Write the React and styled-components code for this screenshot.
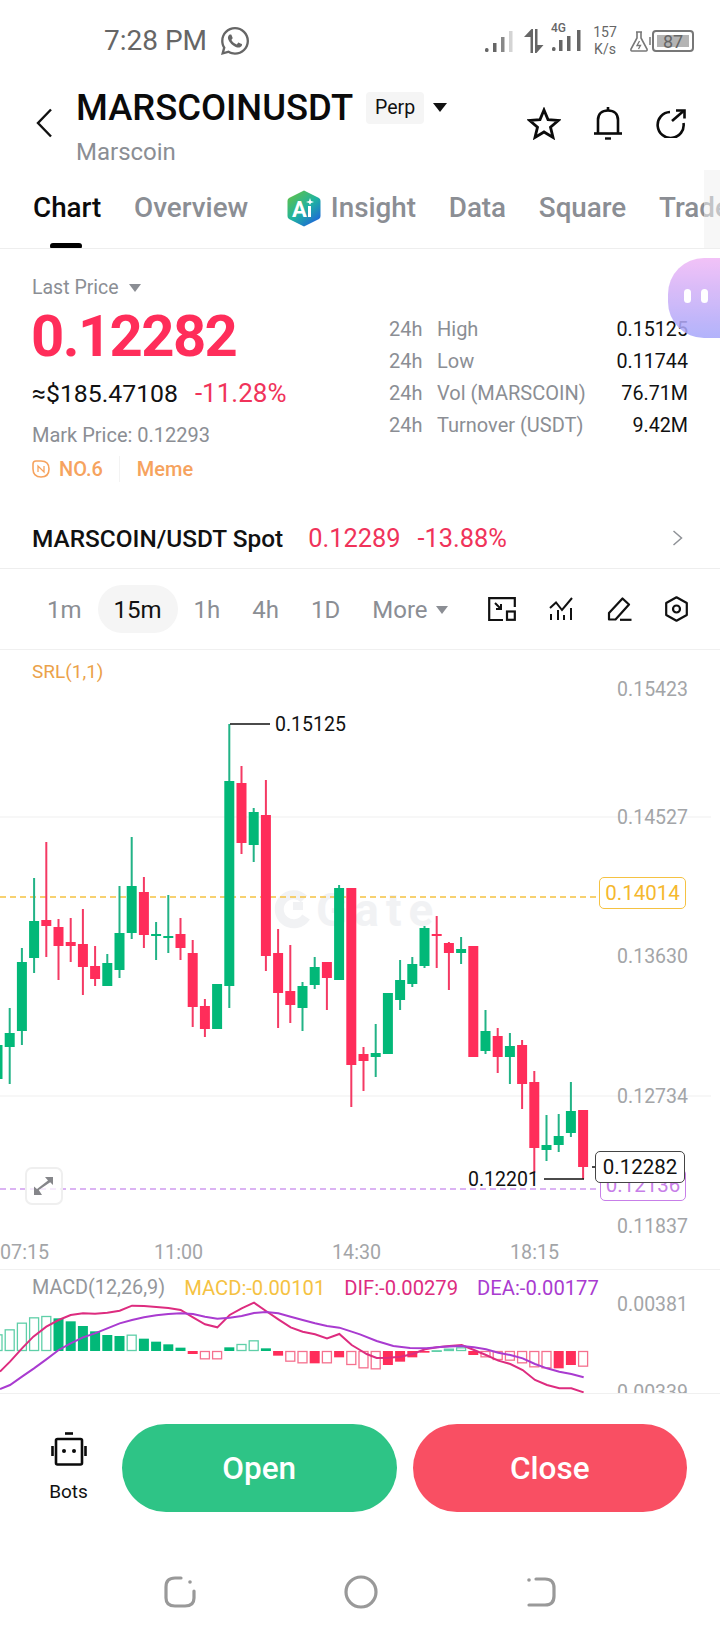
import React from 'react'
import styled, { createGlobalStyle } from 'styled-components'
import { FaWhatsapp } from 'react-icons/fa'

const GlobalStyle = createGlobalStyle`
  html, body {
    margin: 0;
    padding: 0;
    background: #fff;
  }
  * {
    box-sizing: border-box;
  }
`

const GREEN = '#02b878'
const RED = '#ff2d5a'
const GREY = '#8b8e94'
const AXIS = '#a3a5a8'

const Page = styled.div`
  position: relative;
  width: 720px;
  height: 1640px;
  overflow: hidden;
  background: #fff;
  font-family: Roboto, 'Liberation Sans', sans-serif;
  color: #111;
`

const StatusBar = styled.div`
  display: flex;
  align-items: center;
  justify-content: space-between;
  height: 82px;
  padding: 0 26px 0 104px;
  color: #666;
`

const StatusLeft = styled.div`
  display: flex;
  align-items: center;
  gap: 12px;
  font-size: 28px;
  line-height: 34px;
`

const StatusRight = styled.div`
  display: flex;
  align-items: center;
`

const NetworkCell = styled.div`
  position: relative;
  margin-left: ${p => p.$gap}px;
  line-height: 0;
`

const NetworkLabel = styled.span`
  position: absolute;
  left: 0;
  top: -7px;
  font-size: 12px;
  line-height: 12px;
  font-weight: 500;
  color: #666;
`

const NetSpeed = styled.div`
  width: 24px;
  margin: 0 12px 0 11px;
  font-size: 14px;
  line-height: 17px;
  text-align: center;
`

const Battery = styled.div`
  position: relative;
  width: 42px;
  height: 22px;
  margin-left: 3px;
  padding: 3px;
  border: 2px solid #777;
  border-radius: 4px;
  &::before {
    content: '';
    position: absolute;
    left: -5px;
    top: 5px;
    width: 2px;
    height: 8px;
    background: #999;
  }
`

const BatteryFill = styled.div`
  display: flex;
  align-items: center;
  justify-content: center;
  height: 100%;
  background: #b4b4b4;
  font-size: 18px;
  color: #666;
`

const Header = styled.div`
  display: flex;
  align-items: flex-start;
  height: 88px;
  padding: 8px 33px 0 36px;
`

const BackButton = styled.div`
  width: 40px;
  padding-top: 18px;
  line-height: 0;
`

const TitleBlock = styled.div`
  flex: 1;
`

const TitleRow = styled.div`
  display: flex;
  align-items: center;
  height: 34px;
`

const Symbol = styled.div`
  font-size: 36.4px;
  font-weight: 500;
  color: #0b0b0b;
`

const PerpPill = styled.div`
  margin: 2px 0 0 13px;
  padding: 0 9px;
  height: 32px;
  line-height: 31px;
  border-radius: 4px;
  background: #f5f5f5;
  font-size: 19.5px;
`

const Caret = styled.span`
  display: inline-block;
  width: 0;
  height: 0;
  margin-left: ${p => p.$gap || 8}px;
  border-left: ${p => p.$size}px solid transparent;
  border-right: ${p => p.$size}px solid transparent;
  border-top: ${p => p.$size * 1.35}px solid ${p => p.$color};
`

const CoinName = styled.div`
  margin-top: 15px;
  font-size: 24px;
  line-height: 26px;
  color: ${GREY};
`

const HeaderIcons = styled.div`
  display: flex;
  align-items: center;
  gap: 32px;
  padding-top: 16px;
`

const Tabs = styled.div`
  position: relative;
  display: flex;
  align-items: center;
  gap: 32.7px;
  height: 79px;
  padding: 0 0 2px 33px;
  border-bottom: 1px solid #eeeeee;
  white-space: nowrap;
  overflow: hidden;
  &::after {
    content: '';
    position: absolute;
    top: 0;
    right: 0;
    width: 16px;
    height: 100%;
    background: rgba(240, 240, 240, 0.55);
  }
`

const Tab = styled.div`
  position: relative;
  flex: none;
  font-size: 27.8px;
  line-height: 34px;
  font-weight: 500;
  color: ${p => (p.$active ? '#0b0b0b' : GREY)};
`

const TabMark = styled.div`
  position: absolute;
  left: 17px;
  bottom: -24px;
  width: 32px;
  height: 6px;
  border-radius: 3px;
  background: #000;
`

const InsightTab = styled.div`
  display: flex;
  align-items: center;
  gap: 10px;
  margin-left: 6px;
`

const Summary = styled.div`
  display: flex;
  justify-content: space-between;
  height: 257px;
  padding: 26px 32px 0 32px;
`

const SummaryLeft = styled.div`
  display: flex;
  flex-direction: column;
`

const LastPrice = styled.div`
  display: flex;
  align-items: center;
  font-size: 19.5px;
  line-height: 26px;
  color: ${GREY};
`

const BigPrice = styled.div`
  margin: 5px 0 0 -1px;
  font-size: 58px;
  line-height: 60px;
  font-weight: 700;
  letter-spacing: -1.6px;
  color: ${RED};
`

const SubPrice = styled.div`
  display: flex;
  align-items: baseline;
  gap: 17px;
  margin-top: 12px;
  font-size: 24.8px;
  line-height: 30px;
`

const RedText = styled.span`
  font-size: 26px;
  color: #f0335a;
`

const MarkPrice = styled.div`
  margin-top: 13px;
  font-size: 20px;
  line-height: 26px;
  color: ${GREY};
`

const TagRow = styled.div`
  display: flex;
  align-items: center;
  margin-top: 8px;
  font-size: 20px;
  line-height: 26px;
  font-weight: 500;
  color: #f6a35e;
`

const TagRank = styled.div`
  display: flex;
  align-items: center;
  gap: 9px;
  padding-right: 16px;
  margin-right: 17px;
  border-right: 1px solid #f3f3f3;
`

const StatsTable = styled.div`
  width: 299px;
  margin-top: 38px;
`

const StatRow = styled.div`
  display: flex;
  align-items: center;
  height: 32px;
  font-size: 20px;
  color: ${GREY};
`

const StatPeriod = styled.span`
  width: 48px;
`

const StatValue = styled.span`
  margin-left: auto;
  font-size: 19.7px;
  color: #111;
`

const Bubble = styled.div`
  position: absolute;
  top: 258px;
  right: 0;
  display: flex;
  align-items: center;
  justify-content: flex-end;
  gap: 10px;
  width: 52px;
  height: 80px;
  padding: 0 12px 4px 0;
  border-radius: 36px 0 0 36px;
  background: linear-gradient(180deg, #f0b8f6, #a6a7fb);
  opacity: 0.86;
`

const BubbleEye = styled.span`
  width: 7px;
  height: 14px;
  border-radius: 4px;
  background: #fff;
`

const SpotRow = styled.div`
  display: flex;
  align-items: center;
  height: 63px;
  padding: 2px 37px 0 32px;
  border-bottom: 1px solid #eeeeee;
  font-size: 25.4px;
`

const SpotName = styled.span`
  font-size: 24.4px;
  font-weight: 500;
  margin-right: 25px;
`

const SpotChange = styled.span`
  margin-left: 17px;
  color: #f0335a;
`

const SpotPrice = styled.span`
  color: #f0335a;
`

const SpotChevron = styled.div`
  margin-left: auto;
  line-height: 0;
`

const IntervalBar = styled.div`
  display: flex;
  align-items: center;
  height: 81px;
  padding: 0 32px 0 31px;
  border-bottom: 1px solid #f0f0f0;
`

const Interval = styled.div`
  display: flex;
  align-items: center;
  height: 48px;
  padding: 2px 16px 0;
  border-radius: 24px;
  font-size: 24px;
  background: ${p => (p.$active ? '#f5f5f5' : 'transparent')};
  color: ${p => (p.$active ? '#111' : GREY)};
`

const ToolIcons = styled.div`
  display: flex;
  align-items: center;
  margin-left: auto;
  gap: 33.5px;
`

const ChartPanel = styled.div`
  position: relative;
  height: 620px;
  border-bottom: 1px solid #f0f0f0;
  overflow: hidden;
`

const ChartSvg = styled.svg`
  position: absolute;
  left: 0;
  top: 0;
  display: block;
`

const Indicator = styled.div`
  position: absolute;
  left: 32px;
  top: 10px;
  font-size: 19px;
  line-height: 24px;
  color: #eba24a;
`

const Watermark = styled.div`
  position: absolute;
  left: 316px;
  top: 232px;
  font-size: 46px;
  line-height: 56px;
  font-weight: 700;
  letter-spacing: 7px;
  color: #f1f2f4;
`

const AxisLabel = styled.div`
  position: absolute;
  right: 32px;
  top: ${p => p.$y}px;
  transform: translateY(-50%);
  font-size: 19.5px;
  line-height: 24px;
  color: ${AXIS};
`

const PriceTag = styled.div`
  position: absolute;
  left: ${p => p.$left}px;
  top: ${p => p.$top}px;
  width: ${p => p.$width}px;
  height: 32px;
  border: 1px solid ${p => p.$color};
  border-radius: 5px;
  background: #fff;
  font-size: 20.5px;
  line-height: 30px;
  text-align: center;
  color: ${p => p.$text};
`

const PeakLabel = styled.div`
  position: absolute;
  left: ${p => p.$x}px;
  top: ${p => p.$y}px;
  transform: translateY(-50%);
  font-size: 19.5px;
  line-height: 24px;
  color: #111;
`

const ExpandButton = styled.div`
  position: absolute;
  left: 25px;
  top: 517px;
  display: flex;
  align-items: center;
  justify-content: center;
  width: 38px;
  height: 38px;
  border: 2px solid #efefef;
  border-radius: 7px;
  background: rgba(255, 255, 255, 0.75);
`

const TimeLabel = styled.div`
  position: absolute;
  left: ${p => p.$x}px;
  top: 591px;
  font-size: 19.7px;
  line-height: 24px;
  color: ${AXIS};
`

const MacdPanel = styled.div`
  position: relative;
  height: 124px;
  border-bottom: 1px solid #f0f0f0;
  overflow: hidden;
`

const MacdLegend = styled.div`
  position: relative;
  display: flex;
  gap: 19px;
  padding: 6px 0 0 32px;
  line-height: 24px;
`

const LegendItem = styled.span`
  font-size: ${p => p.$size || 20.2}px;
  color: ${p => p.$color};
`

const ActionBar = styled.div`
  display: flex;
  align-items: center;
  gap: 16px;
  height: 148px;
  padding: 0 33px 0 0;
`

const BotsButton = styled.div`
  display: flex;
  flex: none;
  flex-direction: column;
  align-items: center;
  gap: 14px;
  width: 106px;
  padding: 0 0 0 31px;
  font-size: 19px;
  line-height: 24px;
`

const TradeButton = styled.div`
  display: flex;
  flex: 1;
  align-items: center;
  justify-content: center;
  height: 88px;
  border-radius: 44px;
  background: ${p => p.$color};
  color: #fff;
  font-size: 31.5px;
  font-weight: 500;
`

const NavBar = styled.div`
  display: flex;
  align-items: center;
  justify-content: center;
  gap: 148px;
  height: 60px;
  margin-top: 20px;
`

// [color, high, bodyTop, bodyBottom, low]
const candles = [
  ['g', 1045, 1045, 1079, 1079], ['g', 1008, 1033, 1047, 1084], ['g', 948, 962, 1031, 1045],
  ['g', 878, 921, 958, 973], ['r', 842, 920, 926, 957], ['r', 919, 927, 946, 980],
  ['r', 918, 942, 946, 962], ['r', 909, 944, 967, 995], ['r', 946, 966, 979, 986],
  ['g', 954, 963, 986, 986], ['g', 886, 933, 970, 978], ['g', 837, 886, 933, 939],
  ['r', 877, 892, 935, 948], ['g', 922, 934, 936, 960], ['g', 895, 936, 938, 953],
  ['r', 918, 934, 948, 960], ['r', 940, 953, 1007, 1027], ['r', 999, 1006, 1029, 1037],
  ['g', 984, 984, 1029, 1029], ['g', 724, 781, 986, 1008], ['r', 766, 783, 843, 854],
  ['g', 808, 812, 845, 862], ['r', 780, 815, 956, 971], ['r', 929, 953, 993, 1028],
  ['r', 945, 991, 1005, 1023], ['g', 982, 986, 1008, 1031], ['g', 957, 967, 985, 989],
  ['r', 962, 962, 978, 1010], ['g', 885, 888, 980, 980], ['r', 888, 888, 1065, 1107],
  ['r', 1047, 1054, 1061, 1091], ['g', 1024, 1053, 1057, 1077], ['g', 993, 993, 1054, 1054],
  ['g', 960, 980, 1000, 1010], ['g', 957, 964, 984, 987], ['g', 926, 928, 966, 968],
  ['r', 916, 934, 936, 968], ['r', 942, 943, 953, 990], ['g', 937, 949, 953, 964],
  ['r', 946, 946, 1057, 1057], ['g', 1010, 1031, 1051, 1054], ['r', 1028, 1036, 1057, 1073],
  ['g', 1033, 1046, 1057, 1084], ['r', 1040, 1045, 1084, 1109], ['r', 1071, 1082, 1148, 1173],
  ['g', 1115, 1145, 1150, 1161], ['g', 1114, 1136, 1145, 1152], ['g', 1082, 1111, 1133, 1137],
  ['r', 1110, 1110, 1167, 1179],
]

const candleX = i => -2.5 + 12.2 * i

// [color, filled, top, bottom], in units of the 3x crop, baseline 333
const histogram = [
  ['g', 0, 283, 333], ['g', 0, 268, 333], ['g', 0, 248, 333], ['g', 0, 232, 333], ['g', 0, 228, 333],
  ['g', 1, 235, 333], ['g', 1, 244, 333], ['g', 1, 258, 333], ['g', 1, 274, 333], ['g', 1, 285, 333],
  ['g', 1, 288, 333], ['g', 0, 284, 333], ['g', 1, 296, 333], ['g', 1, 305, 333], ['g', 1, 313, 333],
  ['g', 1, 323, 333], ['r', 1, 333, 342], ['r', 0, 333, 358], ['r', 0, 333, 358], ['g', 1, 322, 333],
  ['g', 0, 312, 333], ['g', 0, 301, 333], ['g', 1, 325, 333], ['r', 1, 333, 347], ['r', 0, 333, 365],
  ['r', 0, 333, 370], ['r', 1, 333, 370], ['r', 0, 333, 370], ['r', 1, 333, 352], ['r', 0, 333, 375],
  ['r', 0, 333, 385], ['r', 0, 333, 388], ['r', 1, 333, 375], ['r', 1, 333, 365], ['r', 1, 333, 352],
  ['r', 1, 333, 338], ['g', 0, 331, 333], ['g', 0, 326, 333], ['g', 0, 322, 333], ['r', 1, 333, 345],
  ['r', 0, 333, 352], ['r', 0, 333, 360], ['r', 0, 333, 362], ['r', 0, 333, 370], ['r', 0, 333, 382],
  ['r', 0, 333, 385], ['r', 1, 333, 385], ['r', 1, 333, 375], ['r', 0, 333, 380],
]

const difLine = [
  [0, 395], [30, 365], [66, 325], [100, 290], [139, 260], [176, 240], [212, 225], [249, 220], [285, 221],
  [322, 218], [359, 212], [396, 197], [432, 198], [469, 201], [505, 204], [542, 210], [579, 232], [615, 253],
  [652, 262], [689, 225], [725, 205], [762, 188], [798, 213], [835, 238], [872, 262], [908, 275], [945, 283],
  [981, 295], [1018, 282], [1055, 315], [1080, 330], [1100, 342], [1130, 354], [1165, 353], [1202, 350],
  [1238, 342], [1275, 328], [1311, 322], [1348, 318], [1385, 315], [1422, 330], [1458, 345], [1495, 362],
  [1531, 372], [1568, 390], [1605, 420], [1641, 435], [1678, 445], [1714, 445], [1751, 457],
]

const deaLine = [
  [0, 447], [30, 435], [66, 410], [102, 385], [139, 358], [176, 330], [212, 310], [249, 292], [285, 280],
  [322, 265], [359, 250], [396, 240], [432, 232], [469, 226], [505, 222], [542, 220], [579, 222], [615, 230],
  [652, 236], [689, 233], [725, 228], [762, 219], [798, 216], [835, 220], [872, 230], [908, 240], [945, 250],
  [981, 258], [1018, 263], [1055, 275], [1080, 283], [1130, 303], [1180, 318], [1230, 324], [1280, 325],
  [1330, 320], [1385, 318], [1422, 322], [1458, 328], [1495, 338], [1531, 345], [1568, 355], [1605, 372],
  [1641, 385], [1678, 395], [1714, 402], [1751, 412],
]

const toPoints = line => line.map(([x, y]) => `${x / 3},${y / 3 + 1240}`).join(' ')

const SignalIcon = () => (
  <svg width="31" height="24" viewBox="0 0 31 24">
    <rect x="1" y="19" width="3.5" height="4" rx="1.5" fill="#666" />
    <rect x="9" y="14" width="3.5" height="9" fill="#666" />
    <rect x="17" y="8" width="3.5" height="15" fill="#888" />
    <rect x="25" y="2" width="3.5" height="21" fill="#d4d4d4" />
  </svg>
)

const SignalDataIcon = () => (
  <svg width="31" height="24" viewBox="0 0 31 24">
    <rect x="1" y="18" width="3.5" height="4" rx="1.5" fill="#666" />
    <rect x="8" y="11" width="3.5" height="11" fill="#666" />
    <rect x="16" y="7" width="3.5" height="15" fill="#666" />
    <rect x="26" y="1" width="3.5" height="21" fill="#666" />
  </svg>
)

const ArrowsIcon = () => (
  <svg width="20" height="24" viewBox="0 0 20 24">
    <path d="M0 8 L7.5 0 H9 V24 H6.5 V8 Z" fill="#666" />
    <path d="M11 0 H13.5 V16 H19.5 L12.5 24 H11 Z" fill="#666" />
  </svg>
)

const FlaskIcon = () => (
  <svg width="20" height="22" viewBox="0 0 20 22" fill="none" stroke="#777" strokeWidth="1.6">
    <path d="M7 2 H13 M8 2 V8 L2 19 Q1.5 21 3 21 H17 Q18.5 21 18 19 L12 8 V2" />
    <path d="M10.5 11 L8 15.5 H11.5 L9.5 19" strokeWidth="1.3" />
  </svg>
)

const BackIcon = () => (
  <svg width="17" height="30" viewBox="0 0 17 30" fill="none" stroke="#111" strokeWidth="2.4">
    <path d="M15 1.5 L2 15 L15 28.5" />
  </svg>
)

const StarIcon = () => (
  <svg width="34" height="33" viewBox="0 0 34 33" fill="none" stroke="#0b0b0b" strokeWidth="2.8" strokeLinejoin="miter">
    <path d="M17 3 L21 12.6 L31.5 13.4 L23.5 20.2 L26 30.4 L17 25 L8 30.4 L10.5 20.2 L2.5 13.4 L13 12.6 Z" />
  </svg>
)

const BellIcon = () => (
  <svg width="30" height="34" viewBox="0 0 30 34" fill="none" stroke="#0b0b0b" strokeWidth="2.6">
    <path d="M5 27 V14 C5 8 9 4.5 15 4.5 C21 4.5 25 8 25 14 V27" />
    <path d="M1 27.5 H29" />
    <path d="M15 1 V4" />
    <path d="M12 32.5 H18" strokeWidth="2.4" />
  </svg>
)

const ShareIcon = () => (
  <svg width="32" height="30" viewBox="0 0 32 30" fill="none" stroke="#0b0b0b" strokeWidth="2.6">
    <path d="M15 4 A13 13 0 1 0 28.5 15" />
    <path d="M17 13 L28.5 3" />
    <path d="M21 2.5 H29.5 V10.5" />
  </svg>
)

const InsightIcon = () => (
  <svg width="34" height="37" viewBox="0 0 34 37">
    <defs>
      <linearGradient id="insightFill" x1="0.1" y1="0.1" x2="0.8" y2="1">
        <stop offset="0" stopColor="#5cc04f" />
        <stop offset="0.5" stopColor="#1fb3a0" />
        <stop offset="1" stopColor="#1e63dc" />
      </linearGradient>
    </defs>
    <path d="M17 0.5 L32 8 Q33.5 9 33.5 11 V26 Q33.5 28 32 29 L17 36.5 L2 29 Q0.5 28 0.5 26 V11 Q0.5 9 2 8 Z" fill="url(#insightFill)" />
    <text x="5" y="27" fontFamily="Roboto, sans-serif" fontSize="22" fontWeight="700" fill="#fff">A</text>
    <rect x="21" y="16" width="3" height="11" fill="#fff" />
    <path d="M23 8 L24 11 L27 12 L24 13 L23 15 L22 13 L19 12 L22 11 Z" fill="#fff" />
  </svg>
)

const RankIcon = () => (
  <svg width="18" height="18" viewBox="0 0 18 18" fill="none" stroke="#f6a35e" strokeWidth="1.6">
    <path d="M9 1 C14 1 17 4 17 9 C17 14 14 17 9 17 C4 17 1 14 1 9 V4 Q1 1 4 1 Z" />
    <path d="M6 12 V6 L12 12 V6" strokeWidth="1.3" />
  </svg>
)

const ChevronIcon = () => (
  <svg width="11" height="16" viewBox="0 0 11 16" fill="none" stroke="#8f9297" strokeWidth="1.5">
    <path d="M1.5 1 L9.5 8 L1.5 15" />
  </svg>
)

const FitIcon = () => (
  <svg width="28" height="24" viewBox="0 0 28 24" fill="none" stroke="#111" strokeWidth="2.2">
    <path d="M15 23 H1.2 V1.2 H26.8 V10" />
    <rect x="19" y="14.5" width="7.8" height="8.3" />
    <path d="M7 6 L13 12 M13 7 V12 H8" strokeWidth="2" />
  </svg>
)

const IndicatorIcon = () => (
  <svg width="24" height="24" viewBox="0 0 24 24" fill="none" stroke="#111" strokeWidth="2">
    <path d="M1 11 L7 5.5 L13 13 L23 1" />
    <path d="M2 17 V23 M9 13 V23 M15 18 V23 M22 11 V23" />
  </svg>
)

const PenIcon = () => (
  <svg width="25" height="24" viewBox="0 0 25 24" fill="none" stroke="#111" strokeWidth="2.2" strokeLinejoin="round">
    <path d="M2 16 L15.5 1.5 L22 7.5 L8.5 22.5 H2 Z" />
    <path d="M13 22.8 H24.5" />
  </svg>
)

const SettingsIcon = () => (
  <svg width="23" height="26" viewBox="0 0 23 26" fill="none" stroke="#111" strokeWidth="2.2">
    <path d="M11.5 1.3 L21.8 7 V19 L11.5 24.7 L1.2 19 V7 Z" strokeLinejoin="round" />
    <circle cx="11.5" cy="13" r="3.5" />
  </svg>
)

const ExpandIcon = () => (
  <svg width="20" height="19" viewBox="0 0 20 19" fill="#85868a">
    <path d="M19 0 V8 L16.2 5.2 L4.8 13 L8 18 H0 V9.5 L3 12 L14 3.6 L11 0 Z" />
  </svg>
)

const BotIcon = () => (
  <svg width="36" height="34" viewBox="0 0 36 34" fill="none" stroke="#0b0b0b" strokeWidth="2.6">
    <path d="M14 1.5 H22" />
    <rect x="5" y="7" width="26" height="25.5" rx="1.5" />
    <path d="M1.5 14 V24 M34.5 14 V24" />
    <circle cx="13" cy="19" r="2" fill="#0b0b0b" stroke="none" />
    <circle cx="23" cy="19" r="2" fill="#0b0b0b" stroke="none" />
  </svg>
)

const NavRecent = () => (
  <svg width="32" height="32" viewBox="0 0 32 32" fill="none" stroke="#999" strokeWidth="3.2" strokeLinecap="round">
    <path d="M17 2 H11 C5 2 2 5 2 11 V22 C2 27 5 30 11 30 H21 C27 30 30 27 30 22 V15" />
    <circle cx="26" cy="6" r="1.8" fill="#999" stroke="none" />
  </svg>
)

const NavHome = () => (
  <svg width="34" height="34" viewBox="0 0 34 34" fill="none" stroke="#999" strokeWidth="3.2">
    <circle cx="17" cy="17" r="15" />
  </svg>
)

const NavBack = () => (
  <svg width="30" height="32" viewBox="0 0 30 32" fill="none" stroke="#999" strokeWidth="3.2" strokeLinecap="round">
    <path d="M10 3 H19 C25 3 28 6 28 12 V20 C28 26 25 29 19 29 H3" />
    <circle cx="3" cy="4" r="1.8" fill="#999" stroke="none" />
  </svg>
)

const CandleChart = () => (
  <ChartSvg width="720" height="620" viewBox="0 650 720 620">
    <path d="M0 817 H711 M0 1096 H711" stroke="#efefef" strokeWidth="1" />
    <path d="M304 899 A14.5 14.5 0 1 0 306 917" fill="none" stroke="#f1f2f4" strokeWidth="9" />
    <rect x="293" y="902" width="10" height="8" fill="#f1f2f4" />
    <path d="M0 897 H596" stroke="#f5c242" strokeWidth="1.5" strokeDasharray="6 4" />
    <path d="M0 1189 H598" stroke="#cf9af0" strokeWidth="1.5" strokeDasharray="6 4" />
    {candles.map(([color, high, top, bottom, low], i) => {
      const x = candleX(i)
      const fill = color === 'g' ? GREEN : RED
      return (
        <g key={i}>
          <rect x={x - 1} y={high} width="2" height={low - high} fill={color === 'g' ? '#22b386' : '#f43a64'} />
          <rect x={x - 5} y={top} width="10" height={Math.max(bottom - top, 2)} fill={fill} />
        </g>
      )
    })}
    <path d="M230 724 H270 M544 1179 H584 M592 1167 H596" stroke="#111" strokeWidth="1.5" fill="none" />
  </ChartSvg>
)

const MacdChart = () => (
  <ChartSvg width="720" height="123" viewBox="0 1270 720 123">
    {histogram.map(([color, filled, top, bottom], i) => {
      const x = candleX(i)
      const y = top / 3 + 1240
      const h = (bottom - top) / 3
      const stroke = color === 'g' ? '#5fcfa8' : '#f5708e'
      return filled ? (
        <rect key={i} x={x - 5} y={y} width="10" height={h} fill={color === 'g' ? GREEN : RED} />
      ) : (
        <rect key={i} x={x - 4.5} y={y + 0.5} width="9" height={Math.max(h - 1, 0.5)} fill="none" stroke={stroke} strokeWidth="1.3" />
      )
    })}
    <polyline points={toPoints(difLine)} fill="none" stroke="#dd2c7f" strokeWidth="2" />
    <polyline points={toPoints(deaLine)} fill="none" stroke="#a93bd0" strokeWidth="2" />
  </ChartSvg>
)

const stats = [
  ['High', '0.15125'],
  ['Low', '0.11744'],
  ['Vol (MARSCOIN)', '76.71M'],
  ['Turnover (USDT)', '9.42M'],
]

export default function App() {
  return (
    <Page>
      <GlobalStyle />
      <StatusBar>
        <StatusLeft>
          7:28 PM
          <FaWhatsapp size={32} color="#666" />
        </StatusLeft>
        <StatusRight>
          <SignalIcon />
          <NetworkCell $gap={9}><ArrowsIcon /></NetworkCell>
          <NetworkCell $gap={7}>
            <NetworkLabel>4G</NetworkLabel>
            <SignalDataIcon />
          </NetworkCell>
          <NetSpeed>157<br />K/s</NetSpeed>
          <FlaskIcon />
          <Battery>
            <BatteryFill>87</BatteryFill>
          </Battery>
        </StatusRight>
      </StatusBar>

      <Header>
        <BackButton><BackIcon /></BackButton>
        <TitleBlock>
          <TitleRow>
            <Symbol>MARSCOINUSDT</Symbol>
            <PerpPill>Perp</PerpPill>
            <Caret $size={7} $color="#111" $gap={9} />
          </TitleRow>
          <CoinName>Marscoin</CoinName>
        </TitleBlock>
        <HeaderIcons>
          <StarIcon />
          <BellIcon />
          <ShareIcon />
        </HeaderIcons>
      </Header>

      <Tabs>
        <Tab $active>Chart<TabMark /></Tab>
        <Tab>Overview</Tab>
        <InsightTab>
          <InsightIcon />
          <Tab>Insight</Tab>
        </InsightTab>
        <Tab>Data</Tab>
        <Tab>Square</Tab>
        <Tab>Trade</Tab>
      </Tabs>

      <Summary>
        <SummaryLeft>
          <LastPrice>Last Price<Caret $size={6.5} $color="#8b8e94" $gap={10} /></LastPrice>
          <BigPrice>0.12282</BigPrice>
          <SubPrice>
            <span>≈$185.47108</span>
            <RedText>-11.28%</RedText>
          </SubPrice>
          <MarkPrice>Mark Price: 0.12293</MarkPrice>
          <TagRow>
            <TagRank><RankIcon />NO.6</TagRank>
            Meme
          </TagRow>
        </SummaryLeft>
        <StatsTable>
          {stats.map(([label, value]) => (
            <StatRow key={label}>
              <StatPeriod>24h</StatPeriod>
              {label}
              <StatValue>{value}</StatValue>
            </StatRow>
          ))}
        </StatsTable>
      </Summary>
      <Bubble>
        <BubbleEye />
        <BubbleEye />
      </Bubble>

      <SpotRow>
        <SpotName>MARSCOIN/USDT Spot</SpotName>
        <SpotPrice>0.12289</SpotPrice>
        <SpotChange>-13.88%</SpotChange>
        <SpotChevron><ChevronIcon /></SpotChevron>
      </SpotRow>

      <IntervalBar>
        <Interval>1m</Interval>
        <Interval $active>15m</Interval>
        <Interval>1h</Interval>
        <Interval>4h</Interval>
        <Interval>1D</Interval>
        <Interval>More<Caret $size={6.5} $color="#8b8e94" /></Interval>
        <ToolIcons>
          <FitIcon />
          <IndicatorIcon />
          <PenIcon />
          <SettingsIcon />
        </ToolIcons>
      </IntervalBar>

      <ChartPanel>
        <Watermark>Gate</Watermark>
        <CandleChart />
        <Indicator>SRL(1,1)</Indicator>
        <AxisLabel $y={40}>0.15423</AxisLabel>
        <AxisLabel $y={168}>0.14527</AxisLabel>
        <AxisLabel $y={307}>0.13630</AxisLabel>
        <AxisLabel $y={447}>0.12734</AxisLabel>
        <AxisLabel $y={577}>0.11837</AxisLabel>
        <PeakLabel $x={275} $y={75}>0.15125</PeakLabel>
        <PeakLabel $x={468} $y={530}>0.12201</PeakLabel>
        <PriceTag $left={599} $top={227} $width={87} $color="#f5c242" $text="#f5b82e">0.14014</PriceTag>
        <PriceTag $left={600} $top={519} $width={86} $color="#c77fe8" $text="#c77fe8">0.12136</PriceTag>
        <PriceTag $left={595} $top={501} $width={90} $color="#444" $text="#111">0.12282</PriceTag>
        <ExpandButton><ExpandIcon /></ExpandButton>
        <TimeLabel $x={0}>07:15</TimeLabel>
        <TimeLabel $x={154}>11:00</TimeLabel>
        <TimeLabel $x={332}>14:30</TimeLabel>
        <TimeLabel $x={510}>18:15</TimeLabel>
      </ChartPanel>

      <MacdPanel>
        <MacdChart />
        <MacdLegend>
          <LegendItem $color="#94979c" $size={19.8}>MACD(12,26,9)</LegendItem>
          <LegendItem $color="#f5c242">MACD:-0.00101</LegendItem>
          <LegendItem $color="#dd2c7f">DIF:-0.00279</LegendItem>
          <LegendItem $color="#a93bd0">DEA:-0.00177</LegendItem>
        </MacdLegend>
        <AxisLabel $y={35}>0.00381</AxisLabel>
        <AxisLabel $y={123}>0.00339</AxisLabel>
      </MacdPanel>

      <ActionBar>
        <BotsButton>
          <BotIcon />
          Bots
        </BotsButton>
        <TradeButton $color="#2ec486">Open</TradeButton>
        <TradeButton $color="#f94f63">Close</TradeButton>
      </ActionBar>

      <NavBar>
        <NavRecent />
        <NavHome />
        <NavBack />
      </NavBar>
    </Page>
  )
}
